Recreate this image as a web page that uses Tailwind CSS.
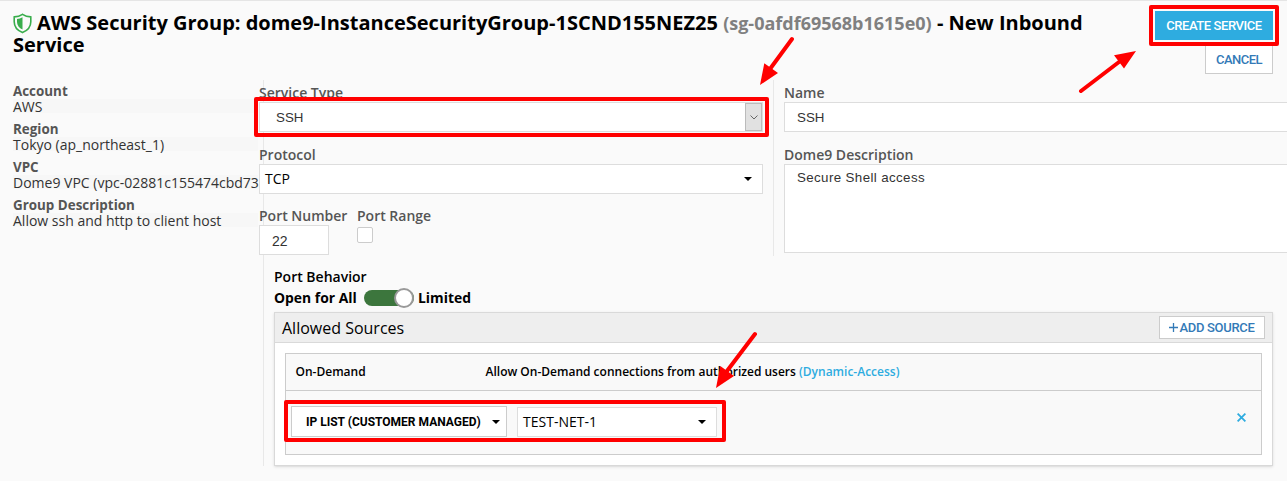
<!DOCTYPE html>
<html lang="en">
<head>
<meta charset="utf-8">
<title>New Inbound Service</title>
<script src="https://cdn.jsdelivr.net/npm/@tailwindcss/browser@4"></script>
</head>
<body class="relative h-[481px] w-[1287px] overflow-hidden border-t border-[#e5e5e5] bg-[#fafafa] font-['Open_Sans',sans-serif] text-[14px] leading-4 text-[#333]">
<header class="flex h-[79px] items-start justify-between pl-[13px] pr-3.5">
  <h1 class="w-[1100px] pt-[11px] text-[20px] leading-[22px] font-bold text-black"><svg class="mr-[5px] inline-block h-[21px] w-[19px] align-[-4px]" viewBox="0 0 19 21" fill="none"><path d="M9.5 1.3C7.2 2.9 4.3 3.8 1.2 3.9V8.8C1.2 13.8 4.6 17.6 9.5 19.6C14.4 17.6 17.8 13.8 17.8 8.8V3.9C14.7 3.8 11.8 2.9 9.5 1.3Z" stroke="#39ad4c" stroke-width="1.6"/><path d="M9.5 4.2C7.9 5.2 6 5.8 4 6V9C4 12.3 6.2 15 9.5 16.6Z" fill="#39ad4c"/></svg>AWS Security Group: dome9-InstanceSecurityGroup-1SCND155NEZ25 <span class="text-[18px] text-[#808080]">(sg-0afdf69568b1615e0)</span> - New Inbound Service</h1>
  <div class="flex flex-col items-end gap-1 pt-2.5 font-[Roboto,sans-serif] text-[13px] font-medium">
    <button class="h-[29px] w-[118px] bg-[#2eace0] pt-px tracking-[-0.43px] text-white">CREATE SERVICE</button>
    <button class="h-[30px] w-[68px] border border-[#ccc] bg-white pt-0.5 tracking-[-0.5px] text-[#337ab7]">CANCEL</button>
  </div>
</header>
<div class="flex">
  <aside class="w-[263px] shrink-0 pl-[13px]">
    <dl class="w-[245px] pt-[3px] whitespace-nowrap">
      <dt class="h-4 text-[13.4px] font-bold text-[#555]">Account</dt><dd class="mb-2 h-3.5 bg-[#f7f7f7]">AWS</dd>
      <dt class="h-4 text-[13.4px] font-bold text-[#555]">Region</dt><dd class="mb-2 h-3.5 bg-[#f7f7f7]">Tokyo (ap_northeast_1)</dd>
      <dt class="h-4 text-[13.4px] font-bold text-[#555]">VPC</dt><dd class="mb-2 h-3.5 bg-[#f7f7f7]">Dome9 VPC (vpc-02881c155474cbd73</dd>
      <dt class="h-4 text-[13.4px] font-bold text-[#555]">Group Description</dt><dd class="mb-2 h-3.5 bg-[#f7f7f7]">Allow ssh and http to client host</dd>
    </dl>
  </aside>
  <main class="h-[386px] w-[1024px] border-l border-[#e8e8e8]">
    <div class="flex h-[176px]">
      <section class="-ml-[5px] w-[514px] shrink-0 pt-[5px]">
        <label class="block h-[17px] font-semibold text-[#555]">Service Type</label>
        <div class="flex h-[30px] w-[504px] items-center justify-between border border-[#ddd] bg-white pl-4 font-['Liberation_Sans',sans-serif] text-[13.33px]"><span class="pt-px">SSH</span>
          <span class="flex h-7 w-[17px] items-center justify-center border border-[#bbb] bg-[#e1e1e1]"><svg class="h-[5px] w-2" viewBox="0 0 8 5" fill="none" stroke="#666"><path d="M.5 .5L4 4L7.5 .5"/></svg></span>
        </div>
        <label class="mt-[15px] block h-[17px] font-semibold text-[#555]">Protocol</label>
        <div class="flex h-[30px] w-[504px] items-center justify-between border border-[#ddd] bg-white pr-2.5 pl-[5px] text-black">TCP
          <svg class="h-1 w-2" viewBox="0 0 8 4"><path d="M0 0H8L4 4Z"/></svg>
        </div>
        <div class="flex pt-[14px]">
          <div class="w-[98px]">
            <label class="block h-[17px] font-semibold whitespace-nowrap text-[#555]">Port Number</label>
            <div class="flex h-[30px] w-[70px] items-center border border-[#ddd] bg-white pt-px pl-3 font-['Liberation_Sans',sans-serif]">22</div>
          </div>
          <div>
            <label class="block h-[19px] font-semibold text-[#555]">Port Range</label>
            <div class="h-4 w-4 rounded-[2px] border border-[#ccc] bg-white"></div>
          </div>
        </div>
      </section>
      <section class="w-[520px] shrink-0 border-l border-[#e8e8e8] pt-[5px] pl-2.5">
        <label class="block h-[17px] font-semibold text-[#555]">Name</label>
        <div class="flex h-[30px] items-center border border-[#ddd] bg-white pt-px pl-3 font-['Liberation_Sans',sans-serif] text-[13.33px]">SSH</div>
        <label class="mt-[15px] block h-[17px] font-semibold text-[#555]">Dome9 Description</label>
        <div class="h-[89px] border border-[#ddd] bg-white pt-[5px] pl-3 font-['Liberation_Sans',sans-serif] text-[13.33px] tracking-[0.38px]">Secure Shell access</div>
      </section>
    </div>
    <section class="ml-2.5 w-[999px] pt-[13px] text-black">
      <h2 class="h-4 font-semibold">Port Behavior</h2>
      <div class="mt-[3px] flex h-[19px] items-center text-[13.9px] font-bold">
        <span class="w-[90px]">Open for All</span>
        <span class="flex h-4 w-[50px] items-center justify-end rounded-full bg-[#3c763d]"><span class="h-5 w-5 shrink-0 rounded-full border-2 border-[#999] bg-white"></span></span>
        <span class="ml-1">Limited</span>
      </div>
      <div class="mt-[5px] h-[154px] border border-[#d9d9d9] bg-white shadow-sm">
        <div class="flex h-[30px] items-center justify-between border-b border-[#d9d9d9] bg-[#eee] pr-[7px] pl-[7px]">
          <h3 class="text-[16px]">Allowed Sources</h3>
          <button class="h-[23px] w-[106px] border border-[#ccc] bg-white font-[Roboto,sans-serif] text-[13px] font-medium tracking-[-0.3px] text-[#337ab7]"><svg class="mr-px inline-block h-[9px] w-[9px] align-[0]" viewBox="0 0 9 9" stroke="#337ab7" stroke-width="1.3"><path d="M0 4.5H9M4.5 0V9"/></svg>ADD SOURCE</button>
        </div>
        <div class="mx-2.5 mt-2.5 h-[102px] border border-[#ccc] bg-[#f9f9f9]">
          <div class="flex h-[37px] items-center border-b border-[#ccc] pl-[9.5px] text-[12px] font-semibold">
            <span class="w-[190px]">On-Demand</span><span>Allow On-Demand connections from authorized users <a class="text-[#2eace0]">(Dynamic-Access)</a></span>
          </div>
          <div class="flex h-[61px] items-center pr-[15px] pl-[5px]">
            <button class="flex h-[31px] w-[216px] items-center justify-between border border-[#ccc] bg-white pr-1.5 pl-3.5 font-[Roboto,sans-serif] text-[12px] font-bold">IP LIST (CUSTOMER MANAGED)<svg class="h-1 w-2" viewBox="0 0 8 4"><path d="M0 0H8L4 4Z"/></svg></button>
            <div class="ml-2.5 flex h-[30px] w-[200px] items-center justify-between border border-[#ddd] bg-white pr-2.5 pl-[5px]">TEST-NET-1<svg class="h-1 w-2" viewBox="0 0 8 4"><path d="M0 0H8L4 4Z"/></svg></div>
            <svg class="mb-2 ml-auto h-[9px] w-[9px]" viewBox="0 0 9 9" stroke="#2eace0" stroke-width="1.8"><path d="M.6 .6L8.4 8.4M8.4 .6L.6 8.4"/></svg>
          </div>
        </div>
      </div>
    </section>
  </main>
</div>
<svg class="pointer-events-none absolute -top-px left-0 h-[481px] w-[1287px]" viewBox="0 0 1287 481" fill="none" stroke="#f00" stroke-width="4" stroke-linecap="round" stroke-linejoin="round">
  <rect x="256" y="99" width="511" height="36"/><rect x="1151" y="7" width="126" height="37"/><rect x="286" y="402" width="438" height="38"/>
  <path d="M792 39L770 69M1081 91L1119 62M755 334L727 371"/>
  <path fill="#f00" stroke="none" d="M760 85L764.3 63.3L778 73ZM1136 51L1114 55.3L1124 68.5ZM716 388L720.3 366L734 376Z"/>
</svg>
</body>
</html>
